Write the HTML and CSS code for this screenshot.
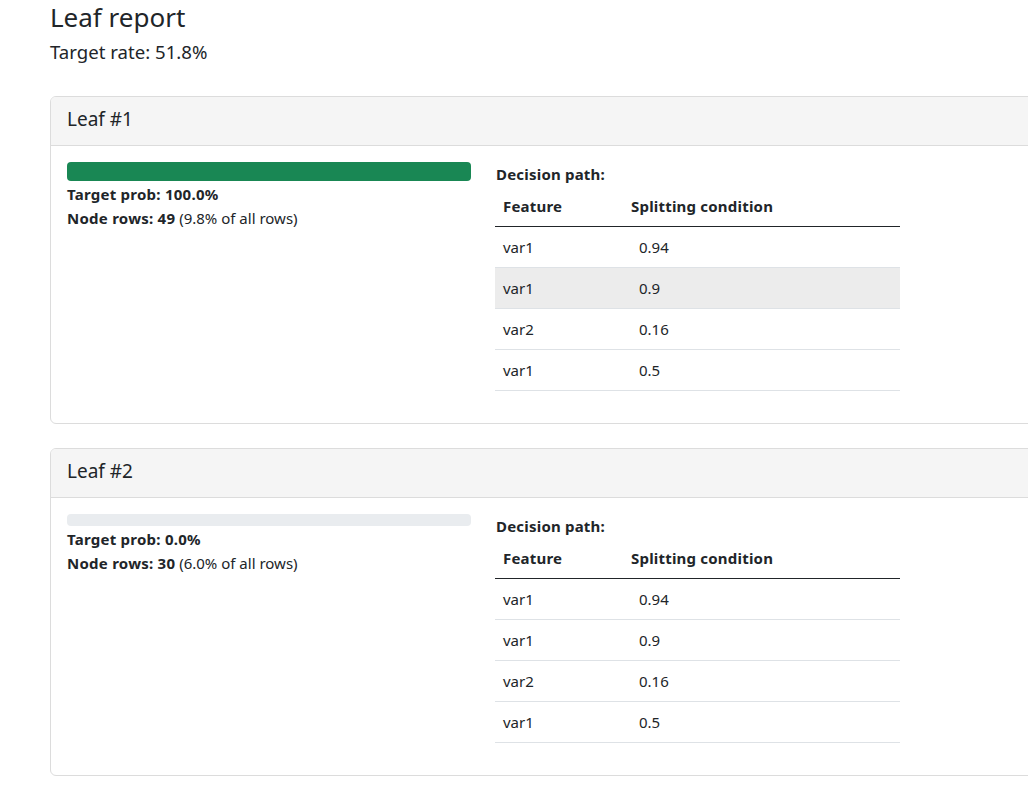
FILE: index.html
```html
<!DOCTYPE html>
<html lang="en">
<head>
<meta charset="utf-8">
<title>Leaf report</title>
<link rel="stylesheet" href="styles.css">
</head>
<body>
<main class="page">
  <h1 class="title">Leaf report</h1>
  <p class="rate">Target rate: 51.8%</p>

  <section class="card">
    <header class="card-header">Leaf #1</header>
    <div class="card-body">
      <div class="col">
        <div class="progress tall"><div class="progress-bar" style="width:100%"></div></div>
        <div class="stat"><b>Target prob: 100.0%</b></div>
        <div class="stat"><b>Node rows: 49</b> (9.8% of all rows)</div>
      </div>
      <div class="col">
        <div class="path-label">Decision path:</div>
        <table class="path">
          <thead><tr><th>Feature</th><th>Splitting condition</th></tr></thead>
          <tbody>
            <tr><td>var1</td><td class="cond">0.94</td></tr>
            <tr class="hover"><td>var1</td><td class="cond">0.9</td></tr>
            <tr><td>var2</td><td class="cond">0.16</td></tr>
            <tr><td>var1</td><td class="cond">0.5</td></tr>
          </tbody>
        </table>
      </div>
      <div class="col"></div>
    </div>
  </section>

  <section class="card">
    <header class="card-header">Leaf #2</header>
    <div class="card-body">
      <div class="col">
        <div class="progress short"><div class="progress-bar" style="width:0%"></div></div>
        <div class="stat"><b>Target prob: 0.0%</b></div>
        <div class="stat"><b>Node rows: 30</b> (6.0% of all rows)</div>
      </div>
      <div class="col">
        <div class="path-label">Decision path:</div>
        <table class="path">
          <thead><tr><th>Feature</th><th>Splitting condition</th></tr></thead>
          <tbody>
            <tr><td>var1</td><td class="cond">0.94</td></tr>
            <tr><td>var1</td><td class="cond">0.9</td></tr>
            <tr><td>var2</td><td class="cond">0.16</td></tr>
            <tr><td>var1</td><td class="cond">0.5</td></tr>
          </tbody>
        </table>
      </div>
      <div class="col"></div>
    </div>
  </section>
</main>
</body>
</html>
```

FILE: styles.css
```css
html, body {
  margin: 0;
  overflow-x: hidden;
}
body {
  font-family: "Noto Sans", "Open Sans", sans-serif;
  font-size: 15px;
  line-height: 24px;
  color: #212529;
  background: #fff;
}
.page {
  padding: 0 0 0 50px;
  width: 1294px;
}
.title {
  margin: 0 0 6px;
  font-size: 26px;
  font-weight: 400;
  line-height: 34px;
}
.rate {
  margin: 0 0 32px;
  font-size: 18.6px;
  line-height: 24px;
}
.card {
  border: 1px solid #dcdcdc;
  border-radius: 6px;
  margin-bottom: 24px;
  overflow: hidden;
}
.card-header {
  background: #f5f5f5;
  border-bottom: 1px solid #dcdcdc;
  padding: 10px 16px 14px;
  font-size: 19px;
  line-height: 24px;
}
.card-body {
  padding: 16px;
  display: grid;
  grid-template-columns: repeat(3, 404px);
  column-gap: 24px;
}
.progress {
  background: #e9ecef;
  border-radius: 4px;
  overflow: hidden;
  display: flex;
}
.progress.tall { height: 19px; }
.progress.short { height: 12px; }
.progress-bar {
  background: #198754;
}
.stat {
  padding-top: 1px;
  margin-bottom: -1px;
}
.stat b {
  font-weight: 700;
  letter-spacing: 0.25px;
}
.path-label {
  font-weight: 700;
  letter-spacing: 0.2px;
  margin-left: 1px;
}
.path {
  width: 405px;
  border-collapse: collapse;
  margin-bottom: 16px;
}
.path th, .path td {
  text-align: left;
  padding: 8px;
  line-height: 24px;
  border-bottom: 1px solid #dee2e6;
}
.path th {
  font-weight: 700;
  letter-spacing: 0.2px;
  border-bottom-color: #212529;
}
.path th:first-child, .path td:first-child { width: 111px; }
.path th:last-child { padding-left: 9px; }
.path td.cond { padding-left: 17px; }
.path tr.hover td { background: #ececec; }
```
